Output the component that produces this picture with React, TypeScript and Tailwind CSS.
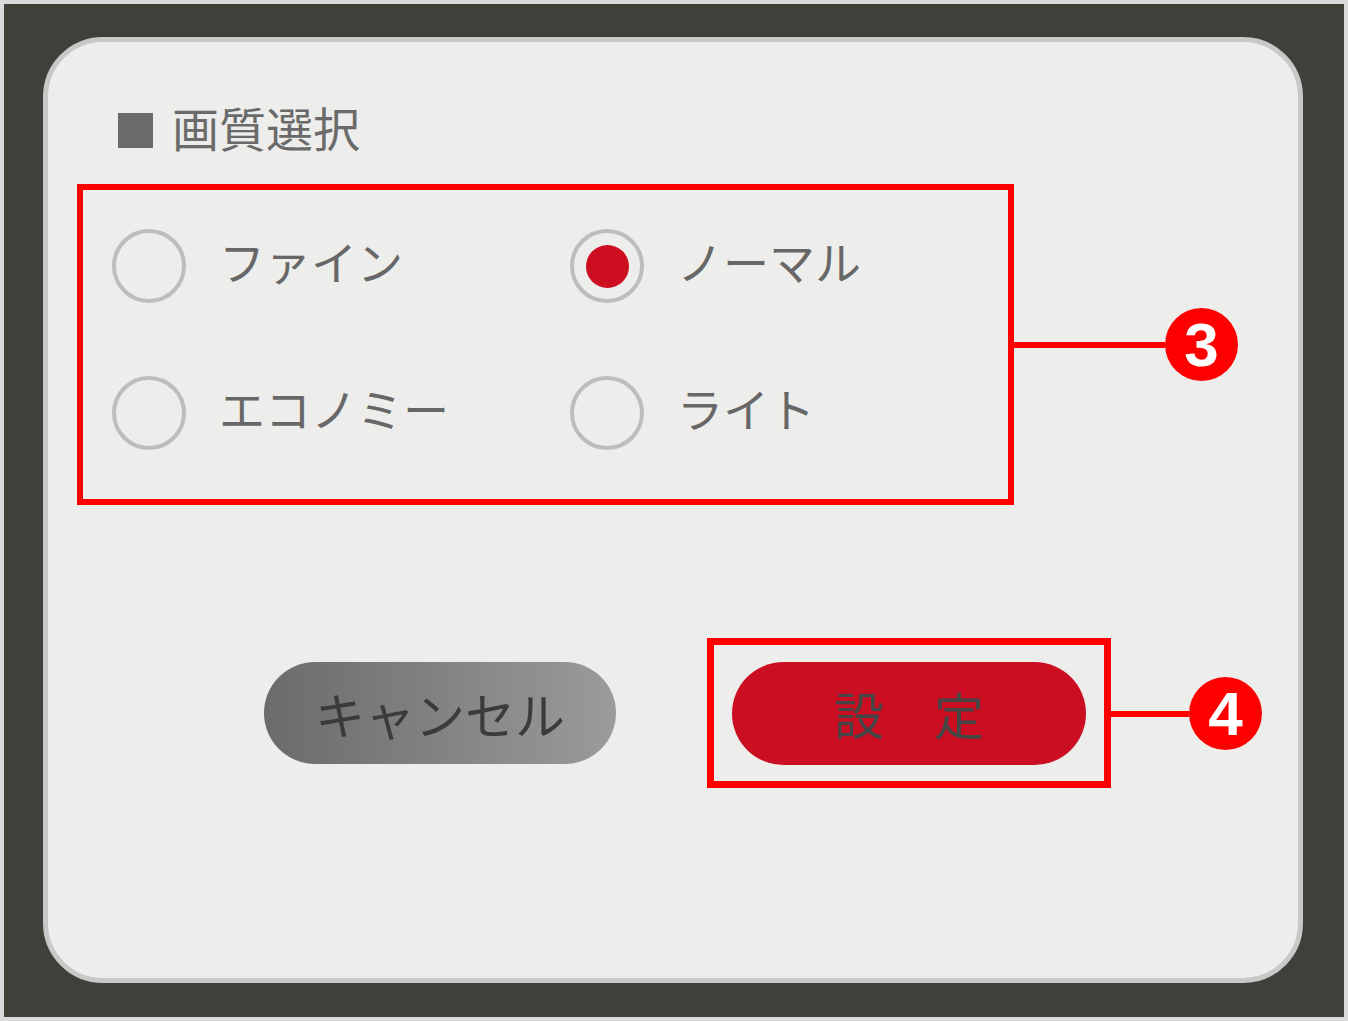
import React from "react";

function Radio({ label, selected }: { label: string; selected?: boolean }) {
  return (
    <div className="flex items-center">
      <div className="w-[74px] h-[74px] rounded-full border-[4px] border-[#bdbdbd] flex items-center justify-center shrink-0">
        {selected && <div className="w-[43px] h-[43px] rounded-full bg-[#cc0e20]" />}
      </div>
      <span className="ml-[33px] pb-[12px] text-[46px] leading-[56px] text-[#676767]">{label}</span>
    </div>
  );
}

function Callout({ n, line }: { n: string; line: string }) {
  return (
    <div className="flex items-center">
      <div className={`${line} h-[6px] bg-[#ff0000]`} />
      <div className="w-[73px] h-[73px] rounded-full bg-[#ff0000] flex items-center justify-center font-['Liberation_Sans',sans-serif] font-bold text-[62px] leading-none text-white">
        {n}
      </div>
    </div>
  );
}

export default function App() {
  return (
    <div className="w-[1348px] h-[1021px] bg-[#dadada] p-[4px] font-['Noto_Sans_CJK_JP',sans-serif]">
      <div className="w-full h-full bg-[#403f39] pl-[39px] pt-[33px]">
        <div className="relative w-[1260px] h-[946px] rounded-[60px] border-[5px] border-[#c8c8c8] bg-[#ededeb] flex flex-col">
          <div className="ml-[70px] mt-[64px] h-[48px] flex items-center">
            <div className="w-[35px] h-[35px] bg-[#6a6a6a]" />
            <span className="ml-[19px] pb-[6px] text-[47px] leading-[48px] text-[#6a6a6a]">画質選択</span>
          </div>

          <div className="relative ml-[29px] mt-[30px] w-[937px] h-[321px] border-[6px] border-[#ff0000]">
            <div className="grid grid-cols-[458px_1fr] gap-y-[73px] pl-[29px] pt-[39px]">
              <Radio label="ファイン" />
              <Radio label="ノーマル" selected />
              <Radio label="エコノミー" />
              <Radio label="ライト" />
            </div>
            <div className="absolute left-[calc(100%+6px)] top-[118px]">
              <Callout n="3" line="w-[151px]" />
            </div>
          </div>

          <div className="mt-[133px] ml-[216px] flex items-center">
            <div className="w-[352px] h-[102px] rounded-full bg-gradient-to-r from-[#6b6b6b] to-[#9b9b9b] flex items-center justify-center">
              <span className="text-[50px] leading-none text-[#3b3b3b]">キャンセル</span>
            </div>
            <div className="relative ml-[91px] w-[404px] h-[150px] border-[7px] border-[#ff0000] flex items-center justify-center">
              <div className="w-[354px] h-[103px] rounded-full bg-[#cc0e22] flex items-center justify-center">
                <span className="text-[50px] leading-none text-[#454545]">設　定</span>
              </div>
              <div className="absolute left-[calc(100%+7px)] top-[32px]">
                <Callout n="4" line="w-[78px]" />
              </div>
            </div>
          </div>
        </div>
      </div>
    </div>
  );
}
